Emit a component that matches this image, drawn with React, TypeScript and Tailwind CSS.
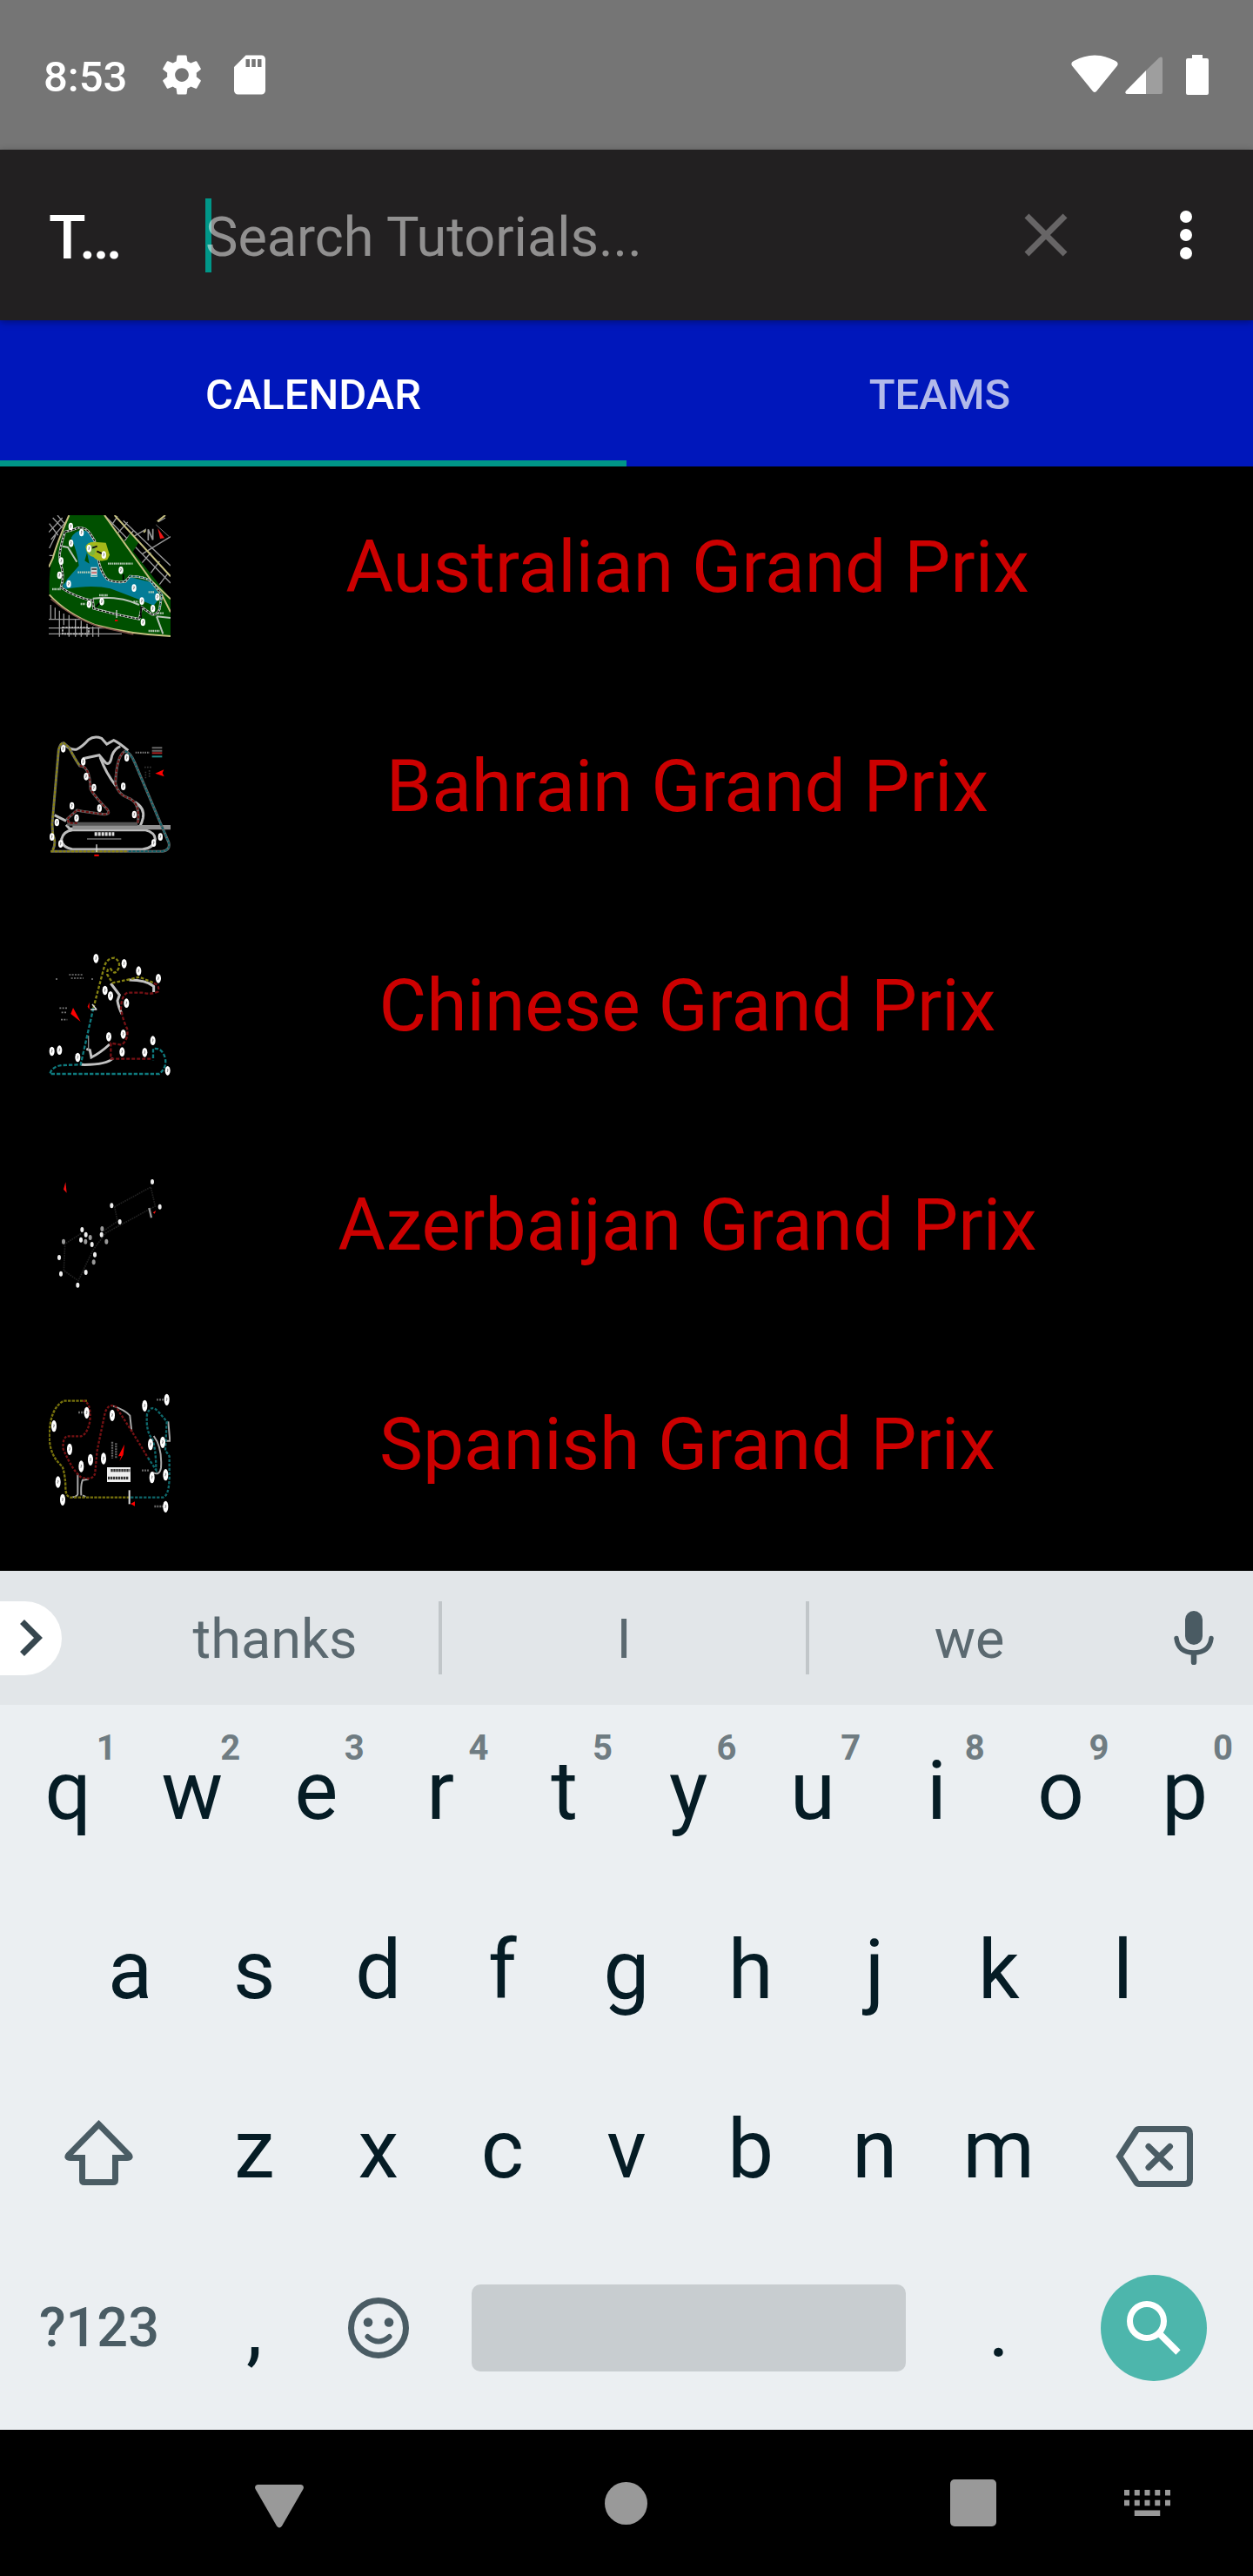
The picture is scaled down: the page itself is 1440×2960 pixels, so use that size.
import type { ReactNode } from "react";

/* ---------- status bar icons ---------- */

function StatusBar() {
  return (
    <div className="flex h-[172px] shrink-0 items-center bg-[#757575] pr-[51px] pl-[50px] text-white">
      <span className="pt-1.5 text-[49px] leading-[60px] font-medium">8:53</span>
      <svg className="ml-9 size-[54px]" viewBox="0 0 24 24" fill="currentColor" aria-hidden="true">
        <path d="M19.43 12.98c.04-.32.07-.64.07-.98s-.03-.66-.07-.98l2.11-1.65c.19-.15.24-.42.12-.64l-2-3.46c-.12-.22-.39-.3-.61-.22l-2.49 1c-.52-.4-1.08-.73-1.69-.98l-.38-2.65C14.46 2.18 14.25 2 14 2h-4c-.25 0-.46.18-.49.42l-.38 2.65c-.61.25-1.17.59-1.69.98l-2.49-1c-.23-.09-.49 0-.61.22l-2 3.46c-.13.22-.07.49.12.64l2.11 1.65c-.04.32-.07.65-.07.98s.03.66.07.98l-2.11 1.65c-.19.15-.24.42-.12.64l2 3.46c.12.22.39.3.61.22l2.49-1c.52.4 1.08.73 1.69.98l.38 2.65c.03.24.24.42.49.42h4c.25 0 .46-.18.49-.42l.38-2.65c.61-.25 1.17-.59 1.69-.98l2.49 1c.23.09.49 0 .61-.22l2-3.46c.12-.22.07-.49-.12-.64l-2.11-1.65zM12 15.5c-1.93 0-3.5-1.57-3.5-3.5s1.57-3.5 3.5-3.5 3.5 1.57 3.5 3.5-1.57 3.5-3.5 3.5z" />
      </svg>
      <svg className="ml-6 size-[54px]" viewBox="0 0 24 24" fill="currentColor" aria-hidden="true">
        <path d="M18 2h-8L4.02 8 4 20c0 1.1.9 2 2 2h12c1.1 0 2-.9 2-2V4c0-1.1-.9-2-2-2zm-6 6h-2V4h2v4zm3 0h-2V4h2v4zm3 0h-2V4h2v4z" />
      </svg>
      <svg className="ml-auto h-[46px] w-[54px]" viewBox="0 0 54 46" fill="currentColor" aria-hidden="true">
        <path d="M25 42 L1 12.500 Q-1 9 3 7 Q27 -6 51 7 Q55 9 53 12.500 L29 42 Q27 44 25 42Z" />
      </svg>
      <svg className="ml-2 h-[46px] w-[43px]" viewBox="0 0 43 46" fill="currentColor" aria-hidden="true">
        <path d="M24 18 L39 3.500 Q43 1 43 5 V43 Q43 45 41 45 H24Z" opacity="0.3" />
        <path d="M24 18 V45 H3 Q-1 45 1 41.500Z" />
      </svg>
      <svg className="ml-[27px] h-[46px] w-[26px]" viewBox="0 0 26 46" fill="currentColor" aria-hidden="true">
        <path d="M7 0H19V4H24Q26 4 26 6V44Q26 46 24 46H2Q0 46 0 44V6Q0 4 2 4H7Z" />
      </svg>
    </div>
  );
}

/* ---------- app bar ---------- */

function AppBar() {
  return (
    <header className="relative z-10 flex h-[196px] shrink-0 items-center bg-[#222021] pr-[35px] pl-14 shadow-[0_2px_8px_rgba(0,0,0,0.35)]">
      <h1 className="w-[180px] shrink-0 pt-1.5 text-[70px] leading-[84px] font-medium text-white">T…</h1>
      <div className="relative flex flex-1 items-center">
        <span className="absolute left-0 h-[85px] w-[7px] bg-[#009688]" />
        <input
          type="text"
          aria-label="Search Tutorials"
          placeholder="Search Tutorials..."
          className="relative w-full bg-transparent pt-1.5 text-[63px] leading-[76px] text-white outline-none placeholder:text-white/50"
        />
      </div>
      <button type="button" aria-label="Clear search" className="text-[#676566]">
        <svg className="size-[84px]" viewBox="0 0 24 24" fill="currentColor">
          <path d="M19 6.410L17.590 5 12 10.590 6.410 5 5 6.410 10.590 12 5 17.590 6.410 19 12 13.410 17.590 19 19 17.590 13.410 12z" />
        </svg>
      </button>
      <button type="button" aria-label="More options" className="ml-[77px] text-white">
        <svg className="size-[84px]" viewBox="0 0 24 24" fill="currentColor">
          <circle cx="12" cy="6" r="2" />
          <circle cx="12" cy="12" r="2" />
          <circle cx="12" cy="18" r="2" />
        </svg>
      </button>
    </header>
  );
}

function Tabs() {
  return (
    <nav role="tablist" className="grid h-[168px] shrink-0 grid-cols-2 bg-[#0017bb] text-[49px] font-medium">
      <button type="button" role="tab" aria-selected="true" className="relative pt-1 text-white">
        CALENDAR
        <span className="absolute inset-x-0 bottom-0 h-[7px] bg-[#009688]" />
      </button>
      <button type="button" role="tab" aria-selected="false" className="pt-1 text-[#b2b9ea]">
        TEAMS
      </button>
    </nav>
  );
}

/* ---------- circuit thumbnails ---------- */

function Markers({ at, rx = 8, ry = 13, fill = "#fff" }: { at: number[][]; rx?: number; ry?: number; fill?: string }) {
  return (
    <>
      {at.map(([x, y], i) => (
        <g key={i}>
          <ellipse cx={x} cy={y} rx={rx} ry={ry} fill={fill} />
          {rx > 7 && <path d={`M${x - 2} ${y - 5}h3v5h-2v5`} stroke="#555" strokeWidth="2" fill="none" />}
        </g>
      ))}
    </>
  );
}

function Thumb({ top, children }: { top: number; children: ReactNode }) {
  return (
    <svg className="size-[140px] shrink-0" viewBox={`48 ${top} 420 420`} fill="none" aria-hidden="true">
      {children}
    </svg>
  );
}

function Melbourne() {
  const edge = "M104 108 Q125 105 150 94 Q175 92 190 113 L206 138 L218 200 Q228 250 250 272 Q275 285 312 280 L328 261 Q380 262 402 280 L438 325 L430 375 Q420 398 402 392 L369 368 L360 409 Q280 395 203 373 L200 345 Q140 335 90 300 Q104 260 88 215 Q78 190 104 108Z";
  return (
    <Thumb top={51}>
      <rect x="48" y="51" width="420" height="420" fill="#000" />
      <g stroke="#999" strokeWidth="4">
        <path d="M50 80L80 120M62 60L95 95M78 51L104 82M48 110L95 60M56 135L110 70M50 165L72 120M50 190H70" />
        <path d="M255 100L285 55M275 125L320 75M300 150L340 105M370 215L400 180M400 250L430 210M430 290L460 250" />
        <path d="M240 51L468 285M305 70L468 225M340 125L450 60M370 185L468 125" />
        <path d="M55 360V410M70 370V410M85 380V470M100 390V430M118 395V470M140 410V470M160 415V470M180 425V470M48 410H170M48 440H240M48 460H300M200 435V470M220 440V470" />
      </g>
      <path d="M118 51H240L468 340V466Q300 462 200 425Q110 385 50 325Q48 230 62 200Z" fill="#005000" />
      <path d="M330 112L357 146L335 182L306 152Z" fill="#005000" />
      <path d="M125 130Q145 92 185 108L208 142L220 200Q230 258 256 276Q290 290 328 264L400 282L430 325L420 350L410 362Q330 330 260 304Q200 290 108 305Q90 300 100 285L152 225Q145 170 125 130Z" fill="#037c96" />
      <path d="M180 180L188 218L172 208ZM97 292Q120 270 108 250Z" fill="#005000" />
      <path d="M118 51Q75 150 62 200L48 230M50 325Q110 390 210 430Q330 462 468 468M240 51L400 275L468 340M275 51L468 262M375 110L450 51M438 325L468 385" stroke="#c4bf80" strokeWidth="6" />
      <path d="M55 340Q130 405 220 435L340 462" stroke="#7c5048" strokeWidth="4" />
      <path d="M96 158L114 162L145 212M200 338L238 335Q310 335 360 360M420 400L468 405M420 400L442 460" stroke="#b8c4b8" strokeWidth="6" />
      <path d={edge} stroke="#c7cfc7" strokeWidth="8" />
      <path d={edge} stroke="#111" strokeWidth="4" strokeDasharray="9 4" />
      <path d="M328 261Q380 262 402 280L438 325L430 375" stroke="#25a6a6" strokeWidth="3" strokeDasharray="6 6" />
      <path d="M175 160Q180 142 208 143L245 146L258 188L250 205Q220 215 202 195Q178 190 175 160Z" fill="#a5b81a" />
      <path d="M178 165Q190 145 206 158Q215 180 200 190Q182 185 178 165Z" fill="#7db43c" />
      <path d="M198 164L215 158M214 175L235 185" stroke="#111" strokeWidth="6" />
      <path d="M305 255V275M210 368L225 352M366 365V405" stroke="#000" strokeWidth="5" />
      <path d="M282 378V405" stroke="#ccc" strokeWidth="4" />
      <path d="M276 414h10" stroke="#e00000" strokeWidth="6" />
      <path d="M148 248H192M252 218H338M222 327H252M60 306H90M158 357H174M392 316H412M340 349H356M425 389H445M392 450H430" stroke="#b7cbb7" strokeWidth="7" strokeDasharray="5 2" />
      <path d="M96 438H186V460H96Z" stroke="#ccc" strokeWidth="5" strokeDasharray="7 3" />
      <rect x="193" y="230" width="22" height="34" fill="#cfd6d6" />
      <path d="M196 237H213" stroke="#111" strokeWidth="4" />
      <path d="M196 249H213" stroke="#c44" strokeWidth="4" />
      <path d="M196 260H213" stroke="#2ab" strokeWidth="4" />
      <path d="M385 90L420 70L450 100L415 150L380 130Z" fill="#000" />
      <path d="M424 96L447 130L432 132Z" fill="#f01515" />
      <path d="M418 84L462 124" stroke="#777" strokeWidth="3" />
      <path d="M391 138V100L407 136V98" stroke="#999" strokeWidth="5" />
      <Markers at={[[124, 90], [161, 111], [125, 148], [91, 209], [85, 258], [117, 288], [187, 166], [238, 188], [297, 241], [342, 302], [369, 347], [423, 333], [407, 373], [373, 420], [231, 349], [187, 358]]} />
    </Thumb>
  );
}

function Sakhir() {
  return (
    <Thumb top={57}>
      <g stroke="#bdbdbd" strokeWidth="9">
        <path d="M98 88Q120 112 145 108Q165 98 185 75Q205 60 230 70L248 90L272 77Q290 85 322 112" />
        <path d="M165 140L222 128L245 155Q260 165 266 130Q275 105 295 98M225 135Q245 190 280 235M68 335L108 355M345 290Q380 310 373 345Q365 380 350 382H120L108 368" />
        <path d="M130 386H380Q415 395 415 418Q410 450 370 453H130Q92 445 92 418Q98 390 130 386Z" />
      </g>
      <path d="M130 377H468" stroke="#909090" strokeWidth="16" />
      <path d="M112 365H355" stroke="#555" strokeWidth="12" />
      <path d="M62 455Q75 430 62 400L60 365L82 110Q88 85 100 86L118 102Q140 145 155 165Q190 165 192 245Q210 275 250 315Q262 332 240 332Q180 325 145 318L112 348L118 362M355 362Q365 290 320 275Q285 262 278 225Q282 130 310 115Q330 118 345 155L462 430Q468 455 440 460H55" stroke="#666" strokeWidth="9" />
      <path d="M62 455Q75 430 62 400L60 365L82 110Q88 85 100 86L118 102Q140 145 155 165M55 460H320" stroke="#8c860f" strokeWidth="6" strokeDasharray="10 4" />
      <path d="M155 165Q190 165 192 245Q210 275 250 315Q262 332 240 332Q180 325 145 318L112 348L118 362H150M355 362Q365 290 320 275Q285 262 278 225Q282 130 310 115" stroke="#701010" strokeWidth="6" strokeDasharray="10 5" />
      <path d="M310 115Q330 118 345 155L462 430Q468 455 440 460H320" stroke="#0f6168" strokeWidth="6" strokeDasharray="10 4" />
      <path d="M180 417H298" stroke="#aaa" strokeWidth="3" />
      <path d="M206 400H274" stroke="#ddd" strokeWidth="13" strokeDasharray="9 3" />
      <path d="M213 436V462" stroke="#ddd" strokeWidth="4" />
      <path d="M205 474H221" stroke="#e00" strokeWidth="7" />
      <path d="M347 119H396" stroke="#777" strokeWidth="6" strokeDasharray="5 3" />
      <path d="M404 103H439M404 113H439" stroke="#666" strokeWidth="6" />
      <path d="M404 121H439" stroke="#a52222" strokeWidth="6" />
      <path d="M404 133H439" stroke="#288" strokeWidth="6" />
      <path d="M378 170H405M382 185V210M395 180V205" stroke="#333" strokeWidth="5" strokeDasharray="5 4" />
      <path d="M415 191L445 178L440 190L446 202Z" fill="#f00" />
      <Markers at={[[98, 106], [167, 151], [177, 202], [204, 240], [223, 311], [128, 303], [144, 345], [76, 360], [59, 410], [89, 434], [317, 137], [305, 236], [343, 333], [410, 431], [433, 410]]} />
    </Thumb>
  );
}

function Shanghai() {
  return (
    <Thumb top={48}>
      <path d="M262 150L292 190L285 210Q288 230 300 255M325 138Q385 138 410 160V180M258 360Q225 390 195 405L190 380L178 376M270 408Q245 432 160 430" stroke="#c2c2c2" strokeWidth="9" />
      <path d="M185 330V380" stroke="#888" strokeWidth="4" />
      <path d="M202 235L240 90Q250 62 275 62Q298 75 288 100Q275 125 262 100Q248 95 250 120L268 148Q320 138 360 128L410 148" stroke="#858212" strokeWidth="7" strokeDasharray="11 6" />
      <path d="M410 150Q432 155 425 178Q400 190 375 182H320Q298 190 297 240Q305 280 318 305Q325 340 300 362L262 356V410H400" stroke="#751014" strokeWidth="7" strokeDasharray="12 6" />
      <path d="M202 235L158 430L95 432Q60 435 52 462H430Q455 440 450 410Q440 370 408 375V415" stroke="#0f7a7e" strokeWidth="7" strokeDasharray="13 6" />
      <path d="M75 132V138M118 120H165M125 132H168M198 132V138M85 235H115M92 250H112M90 275H112" stroke="#777" strokeWidth="5" strokeDasharray="6 4" />
      <path d="M188 215V240L182 230ZM124 255L132 234L158 282Z" fill="#f00" />
      <path d="M198 222L213 240M192 240H214" stroke="#ddd" strokeWidth="4" />
      <Markers ry={16} rx={9} at={[[211, 64], [308, 82], [358, 107], [426, 133], [242, 174], [261, 193], [316, 218], [255, 334], [305, 325], [301, 386], [379, 388], [407, 347], [59, 384], [85, 380], [148, 405], [458, 451]]} />
    </Thumb>
  );
}

function Baku() {
  return (
    <Thumb top={24}>
      <path d="M275 140L400 72L415 138L245 230L200 290L150 395L100 360L104 268L160 232M275 140L285 190L235 225" stroke="#202020" strokeWidth="5" strokeDasharray="5 3" />
      <path d="M106 55L110 92L99 80ZM407 160L418 153L413 164Z" fill="#f01010" />
      <path d="M394 144L402 178" stroke="#999" strokeWidth="7" />
      <Markers rx={6} ry={9} fill="#eee" at={[[405, 54], [431, 140], [265, 136], [293, 192], [163, 219], [176, 236], [230, 236], [159, 254], [197, 270], [84, 315], [90, 371], [176, 366], [148, 410], [207, 305]]} />
      <Markers rx={6} ry={9} fill="#999" at={[[232, 216], [191, 246], [175, 260], [247, 260], [99, 260], [203, 331]]} />
    </Thumb>
  );
}

function Barcelona() {
  return (
    <Thumb top={45}>
      <path d="M270 92Q310 105 328 125L334 180M410 195Q440 235 435 305Q430 335 405 320M148 325V395Q145 405 130 406M160 400Q158 360 165 347L185 344M165 400L175 405M460 145L466 212H452" stroke="#a9a9a9" strokeWidth="6" />
      <path d="M180 74H100Q50 100 50 200Q52 265 95 300Q105 330 106 370Q105 405 125 407H325" stroke="#77720c" strokeWidth="7" strokeDasharray="10 4" />
      <path d="M165 74Q195 75 190 145Q180 190 160 196H110Q95 205 98 240Q130 315 160 338Q205 350 208 320L215 245L242 115Q255 80 280 95Q330 170 390 270" stroke="#751113" strokeWidth="7" strokeDasharray="9 5" />
      <path d="M390 270L418 312Q418 240 405 205Q382 180 387 120Q400 85 425 110L455 145L450 245L464 265V340Q462 405 440 407H325" stroke="#0e676b" strokeWidth="7" strokeDasharray="10 5" />
      <rect x="249" y="303" width="81" height="51" fill="#eee" />
      <path d="M262 314H328M252 340H322" stroke="#333" strokeWidth="10" strokeDasharray="7 2" />
      <path d="M150 114H175M420 70H446M369 314H395M412 438H443M267 215V272M280 220V272" stroke="#666" strokeWidth="7" strokeDasharray="6 3" />
      <path d="M309 224L288 265L298 264L292 282L305 260ZM330 429L345 421V437Z" fill="#f00" />
      <path d="M326 382V430" stroke="#ddd" strokeWidth="6" />
      <Markers rx={9} ry={20} at={[[66, 161], [179, 115], [267, 124], [120, 241], [192, 277], [237, 273], [160, 300], [80, 354], [96, 415], [379, 91], [455, 70], [399, 224], [441, 217], [404, 338], [451, 329], [451, 439]]} />
    </Thumb>
  );
}

const races = [
  { name: "Australian Grand Prix", map: <Melbourne /> },
  { name: "Bahrain Grand Prix", map: <Sakhir /> },
  { name: "Chinese Grand Prix", map: <Shanghai /> },
  { name: "Azerbaijan Grand Prix", map: <Baku /> },
  { name: "Spanish Grand Prix", map: <Barcelona /> },
];

function RaceList() {
  return (
    <ul className="flex-1 overflow-hidden bg-black">
      {races.map((race) => (
        <li key={race.name} className="flex items-start p-14">
          {race.map}
          <span className="flex-1 text-center text-[84px] leading-[120px] text-[#cc0000]">{race.name}</span>
        </li>
      ))}
    </ul>
  );
}

/* ---------- keyboard ---------- */

function SuggestionStrip() {
  return (
    <div className="flex h-[154px] items-center bg-[#e2e6e9] text-[63px] text-[#5b6970]">
      <button type="button" aria-label="Expand toolbar" className="flex h-[85px] w-[71px] items-center rounded-r-full bg-white pl-[23px] text-[#37474f]">
        <svg className="h-[42px] w-[26px]" viewBox="0 0 26 42" fill="none" stroke="currentColor" strokeWidth="7">
          <path d="M2.500 2.500L21 21L2.500 39.500" />
        </svg>
      </button>
      <button type="button" className="ml-[57px] flex-[376] pt-1">thanks</button>
      <span className="h-[84px] w-1 bg-[#c1c6c9]" />
      <button type="button" className="flex-[418] pt-1">I</button>
      <span className="h-[84px] w-1 bg-[#c1c6c9]" />
      <button type="button" className="flex-[368] pt-1">we</button>
      <button type="button" aria-label="Voice input" className="mr-[45px] ml-[51px] text-[#4a5b63]">
        <svg className="h-[62px] w-[46px]" viewBox="0 0 46 62" fill="none" stroke="currentColor">
          <rect x="13" y="0" width="20" height="39" rx="10" fill="currentColor" stroke="none" />
          <path d="M3 31.500Q5 48 23 48Q41 48 43 31.500" strokeWidth="5.500" strokeLinecap="round" />
          <path d="M23 49V59" strokeWidth="6.500" strokeLinecap="round" />
        </svg>
      </button>
    </div>
  );
}

function Key({ letter, hint }: { letter: string; hint?: string }) {
  return (
    <button type="button" className="relative h-full flex-[2] pb-4">
      {letter}
      {hint && <span className="absolute top-[26px] right-4 text-[40px] leading-10 font-bold text-[#6f7c82]">{hint}</span>}
    </button>
  );
}

function Keyboard() {
  return (
    <section aria-label="Keyboard" className="shrink-0 bg-[#ebeff2] text-[#051c25]">
      <SuggestionStrip />
      <div className="px-[7px] pt-1 pb-[23px] text-[94px] leading-[112px]">
        <div className="flex h-[206px]">
          {[..."qwertyuiop"].map((c, i) => (
            <Key key={c} letter={c} hint={String((i + 1) % 10)} />
          ))}
        </div>
        <div className="flex h-[206px]">
          <span className="flex-[1]" />
          {[..."asdfghjkl"].map((c) => (
            <Key key={c} letter={c} />
          ))}
          <span className="flex-[1]" />
        </div>
        <div className="flex h-[206px]">
          <button type="button" aria-label="Shift" className="flex flex-[3] items-center justify-center pb-2 text-[#4a5c64]">
            <svg className="h-[76px] w-[79px]" viewBox="0 0 79 76" fill="none" stroke="currentColor" strokeWidth="7">
              <path d="M39.500 5L74 40Q77 43.500 72 43.500H58.500V69Q58.500 71.500 56 71.500H23Q20.500 71.500 20.500 69V43.500H7Q2 43.500 5 40Z" />
            </svg>
          </button>
          {[..."zxcvbnm"].map((c) => (
            <Key key={c} letter={c} />
          ))}
          <button type="button" aria-label="Backspace" className="flex flex-[3] items-center justify-center text-[#4a5c64]">
            <svg className="h-[70px] w-[89px]" viewBox="0 0 89 70" fill="none" stroke="currentColor" strokeWidth="7">
              <path d="M4.500 35L24 5Q25 3.500 27 3.500H80Q85.500 3.500 85.500 9V61Q85.500 66.500 80 66.500H27Q25 66.500 24 65Z" />
              <path d="M38 23.500L62.500 47.500M62.500 23.500L38 47.500" strokeLinecap="round" />
            </svg>
          </button>
        </div>
        <div className="flex h-[188px] items-center">
          <button type="button" className="flex-[3] text-[63px] leading-[76px] font-medium text-[#4a5c64]">?123</button>
          <button type="button" className="flex-[2]">,</button>
          <button type="button" aria-label="Emoji" className="flex flex-[2] justify-center text-[#4a5c64]">
            <svg className="size-[70px]" viewBox="0 0 70 70" fill="none" stroke="currentColor">
              <circle cx="35" cy="35" r="31.500" strokeWidth="7" />
              <circle cx="23" cy="28.500" r="5.300" fill="currentColor" stroke="none" />
              <circle cx="47" cy="28.500" r="5.300" fill="currentColor" stroke="none" />
              <path d="M22.500 45Q35 56 47.500 45" strokeWidth="6" strokeLinecap="round" />
            </svg>
          </button>
          <div className="flex flex-[8] justify-center">
            <button type="button" aria-label="Space" className="h-[100px] w-7/8 rounded-[10px] bg-[#c8cdd0]" />
          </div>
          <button type="button" className="flex-[2]">.</button>
          <div className="flex flex-[3] justify-center">
            <button type="button" aria-label="Search" className="flex size-[122px] items-center justify-center rounded-full bg-[#4db6ac] text-white">
              <svg className="size-[62px]" viewBox="0 0 62 62" fill="none" stroke="currentColor">
                <circle cx="23" cy="23" r="19.500" strokeWidth="7" />
                <path d="M38 38L59 59" strokeWidth="7.500" />
              </svg>
            </button>
          </div>
        </div>
      </div>
    </section>
  );
}

/* ---------- navigation bar ---------- */

function NavBar() {
  return (
    <nav
      aria-label="System navigation"
      className="grid h-[168px] shrink-0 grid-cols-[221fr_200fr_597fr_200fr_200fr_22fr] items-center justify-items-center bg-black text-[#999999]"
    >
      <button type="button" aria-label="Back" className="col-start-2 pt-2">
        <svg className="h-[50px] w-14" viewBox="0 0 56 50" fill="currentColor">
          <path d="M3 0H53Q57 1 55.500 5L31 47.500Q28 51.500 25 47.500L0.500 5Q-1 1 3 0Z" />
        </svg>
      </button>
      <button type="button" aria-label="Home" className="size-[49px] rounded-full bg-[#999999]" />
      <button type="button" aria-label="Recent apps" className="h-[54px] w-[53px] rounded-[5px] bg-[#999999]" />
      <button type="button" aria-label="Switch keyboard">
        <svg className="h-[30px] w-[53px]" viewBox="0 0 53 30" fill="currentColor">
          {[0, 1, 2, 3, 4].map((i) => (
            <path key={i} d={`M${i * 11.75} 0h6v6.500h-6zM${i * 11.75} 11.750h6v6.500h-6z`} />
          ))}
          <path d="M11.750 23.500h29.500v6.500h-29.500z" />
        </svg>
      </button>
    </nav>
  );
}

export default function App() {
  return (
    <div className="flex h-screen flex-col overflow-hidden bg-black font-['Roboto',sans-serif]">
      <StatusBar />
      <AppBar />
      <Tabs />
      <RaceList />
      <Keyboard />
      <NavBar />
    </div>
  );
}
